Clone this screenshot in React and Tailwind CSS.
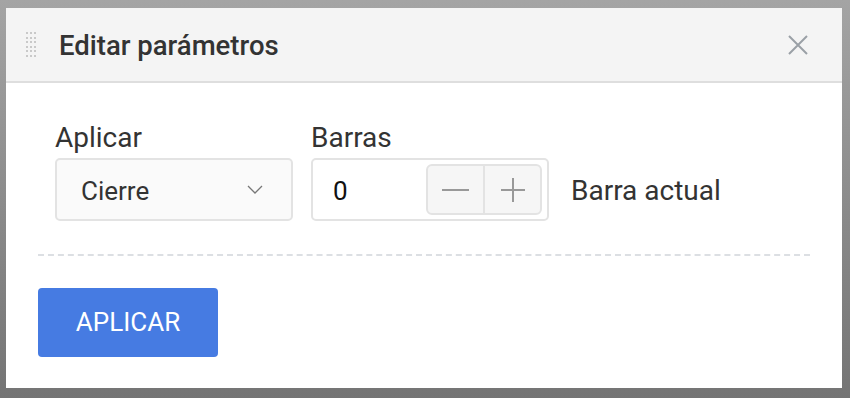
import React from "react";

const Dots = () => (
  <div className="grid grid-cols-3 gap-x-[2px] gap-y-[2.5px]">
    {Array.from({ length: 18 }).map((_, i) => (
      <span key={i} className="block w-[2px] h-[2px] bg-[#c9c9c9]" />
    ))}
  </div>
);

const App = () => {
  return (
    <div
      className="w-[850px] h-[398px] pt-[8px] pl-[6px] bg-gradient-to-b from-[#a4a4a4] to-[#747474]"
      style={{ fontFamily: "Roboto, 'Liberation Sans', sans-serif" }}
    >
      <div className="w-[836px] h-[380px] bg-white flex flex-col">
        <div className="h-[75px] flex items-center bg-[#f4f4f4] border-b-2 border-[#dedede] pl-[20px] pr-[34px]">
          <Dots />
          <h1 className="ml-[23px] mt-[3px] text-[27.5px] font-medium text-[#333]">
            Editar parámetros
          </h1>
          <button className="ml-auto text-[#9aa0a6]">
            <svg width="20" height="20" viewBox="0 0 20 20" fill="none" stroke="currentColor" strokeWidth="2">
              <path d="M1 1 L19 19 M19 1 L1 19" />
            </svg>
          </button>
        </div>

        <div className="px-[32px] pt-[39px]">
          <div className="flex items-end pl-[17px] gap-[18px]">
            <div className="flex flex-col">
              <label className="text-[28px] text-[#333] leading-[32px] mb-[4px]">Aplicar</label>
              <div className="w-[238px] h-[63px] flex items-center justify-between pl-[24px] pr-[28px] border-2 border-[#e3e3e3] rounded-[5px] bg-[#fafafa]">
                <span className="pt-[4px] text-[26px] text-[#333]">Cierre</span>
                <svg width="16" height="9" viewBox="0 0 16 9" fill="none" stroke="#777" strokeWidth="1.3">
                  <path d="M1 1 L8 8 L15 1" />
                </svg>
              </div>
            </div>
            <div className="flex flex-col">
              <label className="text-[28px] text-[#333] leading-[32px] mb-[4px]">Barras</label>
              <div className="w-[238px] h-[63px] flex items-center pl-[20px] pr-[5px] border-2 border-[#e3e3e3] rounded-[5px] bg-white">
                <span className="pt-[4px] text-[26px] text-[#111]">0</span>
                <div className="ml-auto h-[51px] w-[116px] flex border-2 border-[#e3e3e3] rounded-[6px] bg-[#f6f6f6]">
                  <div className="flex-1 flex items-center justify-center border-r-2 border-[#e3e3e3]">
                    <span className="block w-[27px] h-[2px] bg-[#999]" />
                  </div>
                  <div className="flex-1 flex items-center justify-center">
                    <svg width="24" height="24" viewBox="0 0 24 24" stroke="#999" strokeWidth="2">
                      <path d="M12 0 V24 M0 12 H24" />
                    </svg>
                  </div>
                </div>
              </div>
            </div>
            <div className="h-[63px] flex items-center ml-[4px]">
              <span className="pt-[3px] text-[28px] text-[#333]">Barra actual</span>
            </div>
          </div>

          <div className="mt-[33px] border-t-2 border-dashed border-[#dcdfe3]" />

          <button className="mt-[32px] w-[180px] h-[69px] rounded-[4px] bg-[#467be2] text-white text-[26px]">
            APLICAR
          </button>
        </div>
      </div>
    </div>
  );
};

export default App;
